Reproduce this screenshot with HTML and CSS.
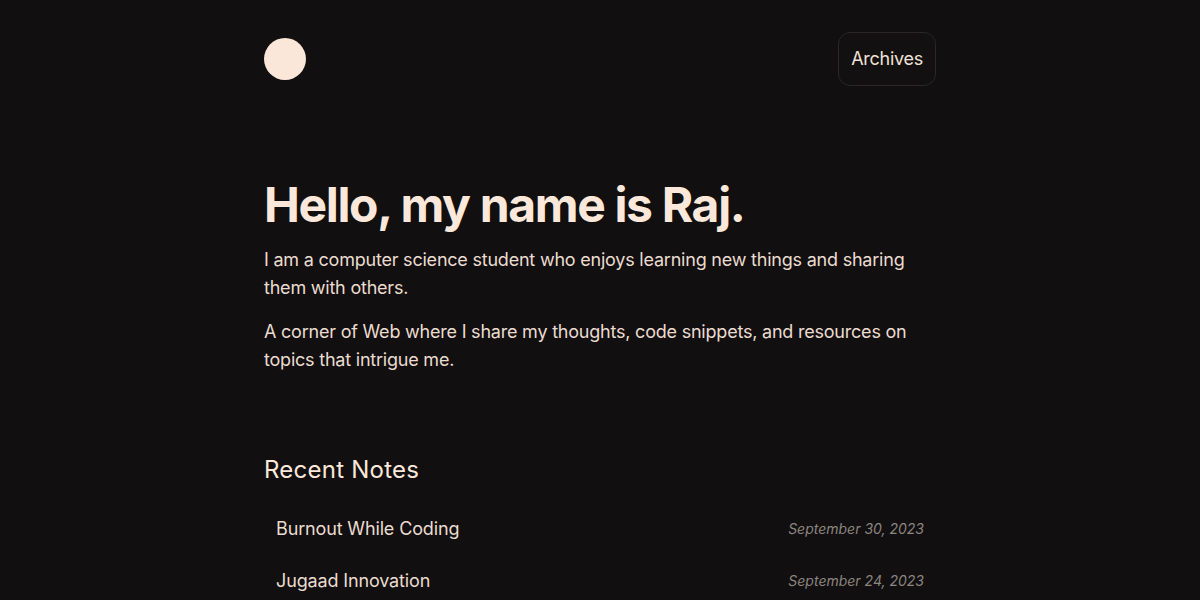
FILE: index.html
```html
<!DOCTYPE html>
<html lang="en">
<head>
<meta charset="utf-8">
<title>Raj</title>
<link rel="stylesheet" href="styles.css">
</head>
<body>
<div class="page">
  <header class="header">
    <a class="logo" href="#" aria-label="Home"></a>
    <a class="nav-btn" href="#">Archives</a>
  </header>
  <main>
    <section class="intro">
      <h1 class="title">Hello, my name is Raj.</h1>
      <p class="lead">I am a computer science student who enjoys learning new things and sharing them with others.</p>
      <p class="lead">A corner of Web where I share my thoughts, code snippets, and resources on topics that intrigue me.</p>
    </section>
    <section class="notes">
      <h2 class="notes-title">Recent Notes</h2>
      <ul class="note-list">
        <li class="note"><a href="#" class="note-name">Burnout While Coding</a><time class="note-date">September 30, 2023</time></li>
        <li class="note"><a href="#" class="note-name">Jugaad Innovation</a><time class="note-date">September 24, 2023</time></li>
      </ul>
    </section>
  </main>
</div>
</body>
</html>
```

FILE: styles.css
```css
html, body {
  margin: 0;
  padding: 0;
  background: #110f0f;
}
body {
  font-family: Inter, "Noto Sans", sans-serif;
  color: #fbe8da;
}
a { color: inherit; text-decoration: none; }
.page {
  width: 672px;
  margin: 0 auto;
}
.header {
  display: flex;
  justify-content: space-between;
  align-items: center;
  padding-top: 32px;
}
.logo {
  width: 42px;
  height: 42px;
  border-radius: 50%;
  background: #fbe7d9;
}
.nav-btn {
  font-size: 18px;
  line-height: 28px;
  padding: 12px 12px;
  border: 1px solid #2a2726;
  border-radius: 12px;
  color: #f0e2d6;
  background: #121010;
  letter-spacing: -0.015em;
}
.intro {
  padding-top: 91px;
}
.title {
  margin: 0;
  font-size: 48px;
  line-height: 56px;
  font-weight: 700;
  letter-spacing: -0.028em;
}
.lead {
  margin: 16px 0 0;
  font-size: 18px;
  line-height: 28px;
  color: #ebdcd0;
  letter-spacing: -0.012em;
}
.intro .title + .lead { margin-top: 13px; }
.notes {
  padding-top: 80px;
}
.notes-title {
  margin: 0;
  font-size: 24px;
  line-height: 32px;
  font-weight: 400;
  letter-spacing: 0.01em;
}
.note-list {
  list-style: none;
  margin: 16px 0 0;
  padding: 0;
}
.note {
  display: flex;
  justify-content: space-between;
  align-items: center;
  padding: 0 12px;
  height: 52px;
}
.note-name {
  font-size: 18px;
  color: #ebdcd0;
  letter-spacing: -0.008em;
}
.note-date {
  font-size: 14px;
  font-style: italic;
  color: #8c8580;
  letter-spacing: 0;
}
```
